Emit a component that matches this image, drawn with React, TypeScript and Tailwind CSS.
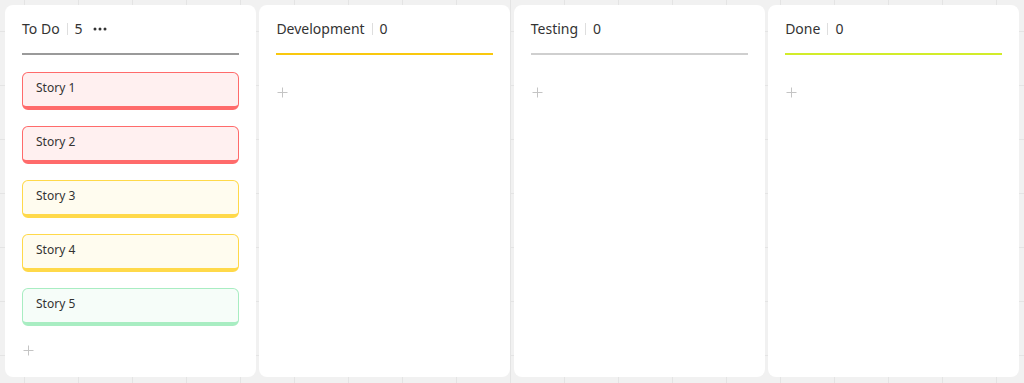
import { Fragment } from "react";

type Story = { title: string; tone: "red" | "yellow" | "green" };

type Column = {
  name: string;
  line: string;
  menu?: boolean;
  stories: Story[];
};

const columns: Column[] = [
  {
    name: "To Do",
    line: "border-[#9a9a9a]",
    menu: true,
    stories: [
      { title: "Story 1", tone: "red" },
      { title: "Story 2", tone: "red" },
      { title: "Story 3", tone: "yellow" },
      { title: "Story 4", tone: "yellow" },
      { title: "Story 5", tone: "green" },
    ],
  },
  { name: "Development", line: "border-[#f9c80e]", stories: [] },
  { name: "Testing", line: "border-[#cfcfcf]", stories: [] },
  { name: "Done", line: "border-[#d2ec2a]", stories: [] },
];

const tones = {
  red: "border-[#ff6b6b] bg-[#fff0f0]",
  yellow: "border-[#ffd94a] bg-[#fffcef]",
  green: "border-[#a8edc2] bg-[#f6fdf9]",
};

function Plus() {
  return (
    <svg width="11" height="11" viewBox="0 0 11 11" className="text-[#c4c4c4]">
      <path d="M5.5 0.5v10M0.5 5.5h10" stroke="currentColor" strokeWidth="1" />
    </svg>
  );
}

function Dots() {
  return (
    <svg width="14" height="4" viewBox="0 0 14 4" className="text-[#333]">
      <circle cx="2" cy="2" r="1.5" fill="currentColor" />
      <circle cx="7" cy="2" r="1.5" fill="currentColor" />
      <circle cx="12" cy="2" r="1.5" fill="currentColor" />
    </svg>
  );
}

function BoardColumn({ col }: { col: Column }) {
  return (
    <div className="flex flex-col rounded-lg bg-white px-[17px]">
      <div className={`flex h-[50px] items-center border-b-2 pb-[1px] ${col.line}`}>
        <span className="text-[14px] text-[#333]">{col.name}</span>
        <span className="mx-[7px] h-[12px] w-px bg-[#dedede]" />
        <span className="text-[14px] text-[#333]">{col.stories.length}</span>
        {col.menu && (
          <span className="ml-[10px] flex items-center">
            <Dots />
          </span>
        )}
      </div>
      <div className="mt-[17px] flex flex-col gap-4">
        {col.stories.map((s) => (
          <Fragment key={s.title}>
            <div
              className={`h-[38px] rounded-md border-[1.5px] border-b-4 pl-[13px] pt-[7px] text-[12px] leading-[16px] text-[#333] ${tones[s.tone]}`}
            >
              {s.title}
            </div>
          </Fragment>
        ))}
        <div className={`flex h-[14px] items-center pl-[1px] ${col.stories.length ? "mt-[1px]" : "mt-[13px]"}`}>
          <Plus />
        </div>
      </div>
    </div>
  );
}

export default function App() {
  return (
    <div
      className="h-[383px] w-[1024px] overflow-hidden bg-[#f1f1f1] bg-[image:linear-gradient(to_right,#e4e4e4_1px,transparent_1px),linear-gradient(to_bottom,#e4e4e4_1px,transparent_1px)] bg-[size:54px_54px] bg-[position:24px_31px] p-[5px] pb-[6px] font-['Noto_Sans',sans-serif]"
    >
      <div className="grid h-full grid-cols-4 gap-[3.5px]">
        {columns.map((c) => (
          <BoardColumn key={c.name} col={c} />
        ))}
      </div>
    </div>
  );
}
